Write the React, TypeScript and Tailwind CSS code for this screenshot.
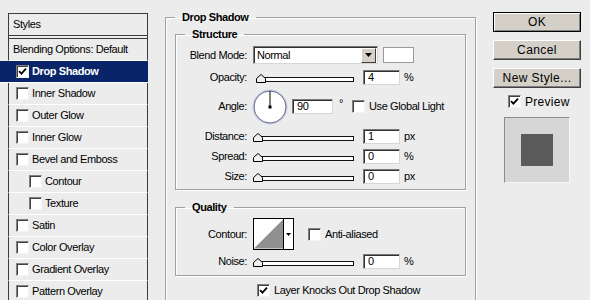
import React from "react";

const F = "font-['Liberation_Sans',Arial,sans-serif]";

function Check({ on }: { on?: boolean }) {
  return (
    <span className="w-[13px] h-[13px] shrink-0 bg-white border border-t-[#808080] border-l-[#808080] border-r-[#f4f4f4] border-b-[#f4f4f4] shadow-[inset_1px_1px_0_#404040] flex items-center justify-center">
      {on && (
        <svg width="9" height="9" viewBox="0 0 9 9">
          <path d="M1 4.2 L3.4 6.6 L8 1.6" stroke="#000" strokeWidth="1.8" fill="none" />
        </svg>
      )}
    </span>
  );
}

function Field({ value, w = "w-[37px]" }: { value: string; w?: string }) {
  return (
    <div className={`${w} h-[15px] shrink-0 bg-white border border-t-[#7a7a7a] border-l-[#7a7a7a] border-r-[#d6d6d6] border-b-[#d6d6d6] shadow-[inset_1px_1px_0_#303030] pl-[4px] leading-[13px]`}>
      {value}
    </div>
  );
}

function Slider({ thumb = "left-[0px]" }: { thumb?: string }) {
  return (
    <div className="relative w-[104px] h-[16px] shrink-0">
      <div className="absolute left-[4px] top-[8px] w-[97px] h-[5px] bg-white border border-[#111]" />
      <svg className={`absolute top-[5px] ${thumb}`} width="10" height="9" viewBox="0 0 10 9">
        <path d="M0.5 8.5 V4.5 L5 0.5 L9.5 4.5 V8.5 Z" fill="#f0f0f0" stroke="#000" />
      </svg>
    </div>
  );
}

function Label({ children }: { children: React.ReactNode }) {
  return <div className="w-[71px] shrink-0 text-right">{children}</div>;
}

function SliderRow({ label, value, unit, thumb }: { label: string; value: string; unit: string; thumb?: string }) {
  return (
    <div className="flex items-center h-[16px] gap-[6px]">
      <Label>{label}</Label>
      <Slider thumb={thumb} />
      <Field value={value} />
      <span className="-ml-[2px]">{unit}</span>
    </div>
  );
}

function Legend({ children, ml }: { children: React.ReactNode; ml: string }) {
  return <legend className={`${ml} px-[7px] font-bold leading-[14px]`}>{children}</legend>;
}

const etched = "border border-[#a0a0a0] shadow-[inset_1px_1px_0_#fff,1px_1px_0_#fff]";

const styles: { name: string; sub?: boolean; on?: boolean }[] = [
  { name: "Drop Shadow", on: true },
  { name: "Inner Shadow" },
  { name: "Outer Glow" },
  { name: "Inner Glow" },
  { name: "Bevel and Emboss" },
  { name: "Contour", sub: true },
  { name: "Texture", sub: true },
  { name: "Satin" },
  { name: "Color Overlay" },
  { name: "Gradient Overlay" },
  { name: "Pattern Overlay" },
];

function Button({ children, main }: { children: React.ReactNode; main?: boolean }) {
  return (
    <div className={`h-[20px] bg-[#d4d0c8] flex items-center justify-center text-[12px] tracking-[0.4px] ${main ? "border border-black shadow-[inset_1px_1px_0_#fff,inset_-1px_-1px_0_#808080]" : "border border-t-white border-l-white border-r-[#404040] border-b-[#404040] shadow-[inset_-1px_-1px_0_#808080]"}`}>
      {children}
    </div>
  );
}

export default function App() {
  return (
    <div className={`w-[590px] h-[300px] overflow-hidden bg-[#ececec] flex text-[11px] tracking-[-0.4px] text-black ${F}`}>
      {/* styles list */}
      <div className="w-[148px] shrink-0 pt-[13px]">
        <div className="ml-[8px] h-[22px] border-t border-x border-[#3c3c3c] flex items-center pl-[4px]">Styles</div>
        <div className="ml-[8px] h-[4px] border border-[#3c3c3c]" />
        <div className="ml-[8px] h-[22px] border-x border-[#3c3c3c] border-b border-b-white flex items-center pl-[4px]">
          Blending Options: Default
        </div>
        {styles.map((s) =>
          s.on ? (
            <div key={s.name} className="h-[22px] bg-[#0a246a] border-b border-b-white pl-[16px] flex items-center gap-[3px] text-white font-bold">
              <Check on />
              {s.name}
            </div>
          ) : (
            <div key={s.name} className={`ml-[8px] h-[22px] border-x border-[#3c3c3c] border-b border-b-white flex items-center gap-[3px] ${s.sub ? "pl-[20px]" : "pl-[7px]"}`}>
              <Check />
              {s.name}
            </div>
          )
        )}
      </div>

      {/* main settings */}
      <div className="ml-[17px] w-[311px] shrink-0 pt-[10px]">
        <fieldset className={`${etched} px-[9px] pb-[20px]`}>
          <Legend ml="ml-[0px]">Drop Shadow</Legend>
          <fieldset className={`${etched} mt-[3px] pt-[5px] pb-[5px]`}>
            <Legend ml="ml-[9px]">Structure</Legend>
            <div className="flex items-center h-[18px] gap-[6px]">
              <Label>Blend Mode:</Label>
              <div className="w-[125px] h-[18px] bg-white border border-t-[#7a7a7a] border-l-[#7a7a7a] border-r-[#d6d6d6] border-b-[#d6d6d6] shadow-[inset_1px_1px_0_#303030] flex items-center justify-between pl-[3px] pr-px">
                <span>Normal</span>
                <span className="w-[15px] h-[15px] bg-[#d4d0c8] border border-t-white border-l-white border-r-[#404040] border-b-[#404040] flex items-center justify-center">
                  <svg width="7" height="4" viewBox="0 0 7 4">
                    <path d="M0 0 H7 L3.5 4 Z" fill="#000" />
                  </svg>
                </span>
              </div>
              <div className="-ml-px w-[31px] h-[16px] bg-white border border-[#9a9a9a]" />
            </div>
            <div className="mt-[5px]">
              <SliderRow label="Opacity:" value="4" unit="%" thumb="left-[3px]" />
            </div>
            <div className="mt-[4px] flex items-center h-[35px] gap-[6px]">
              <Label>Angle:</Label>
              <svg width="36" height="36" viewBox="0 0 36 36" className="-ml-px">
                <circle cx="18" cy="18" r="16.5" fill="#fff" stroke="#c9cde0" strokeWidth="2" />
                <circle cx="18" cy="18" r="16" fill="none" stroke="#6a7293" strokeWidth="1" />
                <path d="M18 18 V2" stroke="#000" strokeWidth="1" />
                <rect x="16.5" y="16.5" width="3" height="3" fill="#000" />
              </svg>
              <div className="-ml-[2px]">
                <Field value="90" w="w-[41px]" />
              </div>
              <span className="-mt-[6px]">°</span>
              <span className="ml-[3px]"><Check /></span>
              <span className="-ml-[2px]">Use Global Light</span>
            </div>
            <div className="mt-[4px]">
              <SliderRow label="Distance:" value="1" unit="px" />
            </div>
            <div className="mt-[4px]">
              <SliderRow label="Spread:" value="0" unit="%" />
            </div>
            <div className="mt-[4px]">
              <SliderRow label="Size:" value="0" unit="px" />
            </div>
          </fieldset>

          <fieldset className={`${etched} mt-[10px] pt-[4px] pb-[6px]`}>
            <Legend ml="ml-[9px]">Quality</Legend>
            <div className="flex items-center h-[32px] gap-[6px]">
              <Label>Contour:</Label>
              <div className="w-[41px] h-[32px] border border-black bg-white flex">
                <svg width="30" height="30" viewBox="0 0 30 30" className="border-r border-black">
                  <path d="M0 30 L30 0 V30 Z" fill="#909090" />
                </svg>
                <div className="flex-1 flex items-center justify-center">
                  <svg width="5" height="3" viewBox="0 0 5 3">
                    <path d="M0 0 H5 L2.5 3 Z" fill="#000" />
                  </svg>
                </div>
              </div>
              <span className="ml-[8px]"><Check /></span>
              <span className="-ml-[2px]">Anti-aliased</span>
            </div>
            <div className="mt-[3px]">
              <SliderRow label="Noise:" value="0" unit="%" />
            </div>
          </fieldset>

          <div className="mt-[8px] ml-[82px] flex items-center gap-[4px] h-[13px]">
            <Check on />
            <span>Layer Knocks Out Drop Shadow</span>
          </div>
        </fieldset>
      </div>

      {/* buttons */}
      <div className="ml-[17px] w-[88px] shrink-0 pt-[12px]">
        <Button main>OK</Button>
        <div className="mt-[8px]">
          <Button>Cancel</Button>
        </div>
        <div className="mt-[8px]">
          <Button>New Style...</Button>
        </div>
        <div className="mt-[7px] ml-[15px] flex items-center gap-[4px] h-[13px] text-[12px] tracking-[0.3px]">
          <Check on />
          <span>Preview</span>
        </div>
        <div className="mt-[9px] ml-[11px] w-[66px] h-[66px] bg-[#d6d6d6] border border-t-[#8c8c8c] border-l-[#8c8c8c] border-r-[#f6f6f6] border-b-[#f6f6f6] flex items-center justify-center">
          <div className="w-[32px] h-[32px] bg-[#5a5a5a]" />
        </div>
      </div>
    </div>
  );
}
